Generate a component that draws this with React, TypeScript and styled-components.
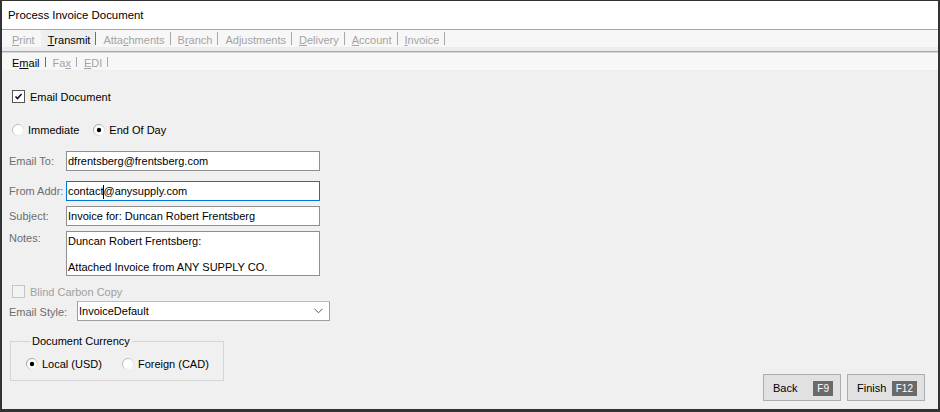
import React, { useId } from 'react';
import styled, { createGlobalStyle } from 'styled-components';

const GlobalStyle = createGlobalStyle`
  html, body {
    margin: 0;
    padding: 0;
    background: #f0f0f0;
  }
  body {
    font-family: 'Liberation Sans', Arial, sans-serif;
    font-size: 11px;
    color: #000;
  }
`;

const Window = styled.div`
  width: 940px;
  height: 412px;
  box-sizing: border-box;
  border: solid #333;
  border-width: 1px 2px 3px 2px;
  background: #f0f0f0;
  display: flex;
  flex-direction: column;
  overflow: hidden;
`;

const TitleBar = styled.div`
  height: 28px;
  flex: none;
  background: #fff;
  border-bottom: 1px solid #a5a5a5;
  display: flex;
  align-items: center;
  padding-left: 6px;
  font-size: 11.4px;
  color: #000;
`;

const TabStrip = styled.div<{ $sub?: boolean }>`
  flex: none;
  display: flex;
  align-items: flex-start;
  padding-left: 3px;
  height: ${p => (p.$sub ? '18px' : '21px')};
  background: ${p =>
    p.$sub
      ? '#f7f7f7'
      : 'linear-gradient(#f7f7f7 0, #f7f7f7 17px, #ececec 17px)'};
  border-bottom: ${p => (p.$sub ? 'none' : '1px solid #a8a8a8')};
  box-shadow: ${p => (p.$sub ? 'inset 0 1px 0 #d6d6d6' : 'none')};
`;

const Tab = styled.span<{ $active?: boolean; $sub?: boolean }>`
  display: flex;
  align-items: center;
  box-sizing: border-box;
  height: ${p => (p.$sub ? '14px' : '17px')};
  margin-top: ${p => (p.$sub ? '4px' : '0')};
  padding: ${p => (p.$sub ? '0 5px 0 7px' : '4px 5px 0 7px')};
  line-height: 13px;
  color: ${p => (p.$active ? '#000' : '#a3a3a3')};
  background: ${p => (p.$active && !p.$sub ? '#efefef' : 'transparent')};
  white-space: nowrap;

  u {
    text-decoration-thickness: 1px;
    text-underline-offset: 1px;
  }
`;

const Sep = styled.span<{ $dark?: boolean; $hidden?: boolean; $sub?: boolean }>`
  width: 1px;
  height: ${p => (p.$sub ? '10px' : '13px')};
  margin-top: ${p => (p.$sub ? '5px' : '2px')};
  flex: none;
  background: ${p =>
    p.$hidden ? 'transparent' : p.$dark ? '#6f6f6f' : '#a8a8a8'};
`;

const Body = styled.div`
  flex: 1;
  display: flex;
  flex-direction: column;
  padding: 0 13px 0 7px;
  border-top: 1px solid #ededed;
`;

const CheckRow = styled.label<{ $top: number; $disabled?: boolean }>`
  display: flex;
  align-items: center;
  gap: 5px;
  height: 13px;
  margin: ${p => p.$top}px 0 0 3px;
  color: ${p => (p.$disabled ? '#a0a0a0' : '#000')};
`;

const Box = styled.span<{ $disabled?: boolean }>`
  width: 11px;
  height: 11px;
  flex: none;
  border: 1px solid ${p => (p.$disabled ? '#c4c4c4' : '#555')};
  background: ${p => (p.$disabled ? '#f3f3f3' : '#fff')};
  display: flex;
  align-items: center;
  justify-content: center;
`;

const RadioRow = styled.div<{ $top: number }>`
  display: flex;
  align-items: center;
  height: 13px;
  margin: ${p => p.$top}px 0 0 3px;
`;

const RadioItem = styled.span<{ $gap: number }>`
  display: flex;
  align-items: center;
  gap: 4px;
  margin-right: ${p => p.$gap}px;
  color: #000;
`;

const FieldRow = styled.div<{ $top: number }>`
  display: flex;
  align-items: flex-start;
  margin-top: ${p => p.$top}px;
`;

const FieldLabel = styled.span<{ $width: number; $offset?: number }>`
  width: ${p => p.$width}px;
  flex: none;
  color: #6d6d6d;
  line-height: 13px;
  margin-top: ${p => p.$offset ?? 4}px;
`;

const TextBox = styled.div<{ $focused?: boolean; $height?: number }>`
  width: 254px;
  height: ${p => p.$height ?? 20}px;
  box-sizing: border-box;
  border: 1px solid ${p => (p.$focused ? '#0078d7' : '#8f8f8f')};
  background: #fff;
  padding: 3px 2px 0 1px;
  line-height: 13px;
  color: #000;
  white-space: pre;
  display: flex;
  flex-direction: column;
`;

const Line = styled.span`
  display: flex;
  align-items: center;
  height: 13px;
`;

const Caret = styled.span`
  display: inline-block;
  width: 1px;
  height: 14px;
  background: #000;
  margin: 0 -1px 0 0;
`;

const Select = styled.div`
  width: 253px;
  height: 20px;
  box-sizing: border-box;
  border: 1px solid #9f9f9f;
  border-top-color: #bdbdbd;
  background: #fff;
  display: flex;
  align-items: center;
  justify-content: space-between;
  padding: 0 6px 0 1px;
  color: #000;
`;

const Footer = styled.div`
  display: flex;
  justify-content: space-between;
  align-items: flex-start;
  margin-top: 14px;
`;

const Group = styled.fieldset`
  margin: 0 0 0 1px;
  width: 214px;
  height: 46px;
  box-sizing: border-box;
  border: 1px solid #d5d5d5;
  padding: 0 0 0 15px;
  display: flex;
  align-items: flex-start;

  legend {
    padding: 0 2px 0 1px;
    margin-left: 5px;
    line-height: 12px;
    color: #000;
  }
`;

const GroupRadios = styled.div`
  display: flex;
  align-items: center;
  height: 13px;
  margin-top: 10px;
`;

const Buttons = styled.div`
  display: flex;
  gap: 6px;
  margin-top: 39px;
`;

const Button = styled.button`
  width: 78px;
  height: 27px;
  box-sizing: border-box;
  border: 1px solid #adadad;
  background: #e1e1e1;
  display: flex;
  align-items: center;
  justify-content: space-between;
  padding: 0 7px 0 9px;
  font: inherit;
  color: #000;
`;

const Key = styled.span`
  background: #6a6a6a;
  color: #fff;
  font-size: 10px;
  height: 15px;
  line-height: 15px;
  padding: 0 4px;
  margin-top: 2px;
`;

function CheckGlyph() {
  return (
    <svg width="9" height="9" viewBox="0 0 9 9">
      <path d="M1.5 4.5 L3.5 6.5 L7.5 2" fill="none" stroke="#111" strokeWidth="1.6" />
    </svg>
  );
}

function Radio({ checked }: { checked?: boolean }) {
  const id = useId();
  return (
    <svg width="12" height="12" viewBox="0 0 12 12">
      <defs>
        <linearGradient id={id} x1="0" y1="0" x2="1" y2="1">
          <stop offset="0" stopColor={checked ? '#8a8a8a' : '#a8a8a8'} />
          <stop offset="1" stopColor="#ffffff" />
        </linearGradient>
      </defs>
      <circle cx="6" cy="6" r="5.5" fill="#fff" stroke={`url(#${id})`} />
      {checked && <circle cx="6" cy="6" r="2.2" fill="#000" />}
    </svg>
  );
}

function Chevron() {
  return (
    <svg width="9" height="6" viewBox="0 0 9 6">
      <path d="M0.5 0.8 L4.5 4.8 L8.5 0.8" fill="none" stroke="#555" strokeWidth="1" />
    </svg>
  );
}

const mainTabs: { pre: string; key: string; post: string; active?: boolean }[] = [
  { pre: '', key: 'P', post: 'rint' },
  { pre: '', key: 'T', post: 'ransmit', active: true },
  { pre: 'Atta', key: 'c', post: 'hments' },
  { pre: 'B', key: 'r', post: 'anch' },
  { pre: 'Adjustments', key: '', post: '' },
  { pre: '', key: 'D', post: 'elivery' },
  { pre: '', key: 'A', post: 'ccount' },
  { pre: '', key: 'I', post: 'nvoice' },
];

const subTabs: { pre: string; key: string; post: string; active?: boolean }[] = [
  { pre: 'E', key: 'm', post: 'ail', active: true },
  { pre: 'Fa', key: 'x', post: '' },
  { pre: '', key: 'E', post: 'DI' },
];

export default function App() {
  return (
    <>
      <GlobalStyle />
      <Window>
        <TitleBar>Process Invoice Document</TitleBar>
        <TabStrip>
          {mainTabs.map((t, i) => (
            <React.Fragment key={i}>
              <Tab $active={t.active}>
                {t.pre}
                {t.key && <u>{t.key}</u>}
                {t.post}
              </Tab>
              <Sep $dark={t.active} $hidden={mainTabs[i + 1]?.active} />
            </React.Fragment>
          ))}
        </TabStrip>
        <TabStrip $sub>
          {subTabs.map((t, i) => (
            <React.Fragment key={i}>
              <Tab $sub $active={t.active}>
                {t.pre}
                {t.key && <u>{t.key}</u>}
                {t.post}
              </Tab>
              <Sep $sub $dark={t.active} />
            </React.Fragment>
          ))}
        </TabStrip>
        <Body>
          <CheckRow $top={19}>
            <Box>
              <CheckGlyph />
            </Box>
            Email Document
          </CheckRow>

          <RadioRow $top={20}>
            <RadioItem $gap={14}>
              <Radio />
              Immediate
            </RadioItem>
            <RadioItem $gap={0}>
              <Radio checked />
              End Of Day
            </RadioItem>
          </RadioRow>

          <FieldRow $top={15}>
            <FieldLabel $width={57}>Email To:</FieldLabel>
            <TextBox>dfrentsberg@frentsberg.com</TextBox>
          </FieldRow>

          <FieldRow $top={10}>
            <FieldLabel $width={57}>From Addr:</FieldLabel>
            <TextBox $focused>
              <Line>
                contact
                <Caret />
                @anysupply.com
              </Line>
            </TextBox>
          </FieldRow>

          <FieldRow $top={5}>
            <FieldLabel $width={57}>Subject:</FieldLabel>
            <TextBox>Invoice for: Duncan Robert Frentsberg</TextBox>
          </FieldRow>

          <FieldRow $top={5}>
            <FieldLabel $width={57} $offset={1}>
              Notes:
            </FieldLabel>
            <TextBox $height={45}>
              <Line>Duncan Robert Frentsberg:</Line>
              <Line />
              <Line>Attached Invoice from ANY SUPPLY CO.</Line>
            </TextBox>
          </FieldRow>

          <CheckRow $top={9} $disabled>
            <Box $disabled />
            Blind Carbon Copy
          </CheckRow>

          <FieldRow $top={3}>
            <FieldLabel $width={68} $offset={5}>
              Email Style:
            </FieldLabel>
            <Select>
              <span>InvoiceDefault</span>
              <Chevron />
            </Select>
          </FieldRow>

          <Footer>
            <Group>
              <legend>Document Currency</legend>
              <GroupRadios>
                <RadioItem $gap={20}>
                  <Radio checked />
                  Local (USD)
                </RadioItem>
                <RadioItem $gap={0}>
                  <Radio />
                  Foreign (CAD)
                </RadioItem>
              </GroupRadios>
            </Group>
            <Buttons>
              <Button>
                Back
                <Key>F9</Key>
              </Button>
              <Button>
                Finish
                <Key>F12</Key>
              </Button>
            </Buttons>
          </Footer>
        </Body>
      </Window>
    </>
  );
}
